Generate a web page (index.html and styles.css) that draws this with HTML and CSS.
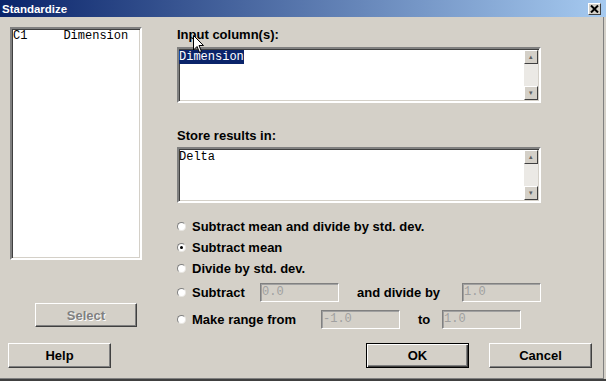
FILE: index.html
```html
<!DOCTYPE html>
<html lang="en">
<head>
    <meta charset="UTF-8">
    <meta name="viewport" content="width=device-width, initial-scale=1.0">
    <title>Standardize</title>
    <link rel="stylesheet" href="styles.css">
</head>
<body>
    <div class="window">
        <div class="titlebar">
            <span class="title">Standardize</span>
            <span class="close-btn">
                <svg width="9" height="8" viewBox="0 0 9 8">
                    <path d="M1 0.5 L8 7.5 M8 0.5 L1 7.5" stroke="#000" stroke-width="2"/>
                </svg>
            </span>
        </div>

        <div class="content">
            <div class="main">
                <div class="left-col">
                    <div class="listbox">
                        <div class="list-item">C1     Dimension</div>
                    </div>
                    <button class="btn select-btn" disabled>Select</button>
                </div>

                <div class="right-col">
                    <div class="field-label">Input column(s):</div>
                    <div class="textbox">
                        <div class="textbox-text"><span class="selected">Dimension</span></div>
                        <div class="scrollbar">
                            <span class="scroll-btn">&#9652;</span>
                            <span class="scroll-track"></span>
                            <span class="scroll-btn">&#9662;</span>
                        </div>
                    </div>

                    <div class="field-label store-label">Store results in:</div>
                    <div class="textbox">
                        <div class="textbox-text">Delta</div>
                        <div class="scrollbar">
                            <span class="scroll-btn">&#9652;</span>
                            <span class="scroll-track"></span>
                            <span class="scroll-btn">&#9662;</span>
                        </div>
                    </div>

                    <div class="options">
                        <div class="option"><span class="radio"></span>Subtract mean and divide by std. dev.</div>
                        <div class="option"><span class="radio checked"></span>Subtract mean</div>
                        <div class="option"><span class="radio"></span>Divide by std. dev.</div>
                        <div class="option tall">
                            <span class="radio"></span>
                            <span class="opt-text subtract-text">Subtract</span>
                            <span class="small-input">0.0</span>
                            <span class="opt-text divide-text">and divide by</span>
                            <span class="small-input">1.0</span>
                        </div>
                        <div class="option tall">
                            <span class="radio"></span>
                            <span class="opt-text range-text">Make range from</span>
                            <span class="small-input">-1.0</span>
                            <span class="opt-text to-text">to</span>
                            <span class="small-input">1.0</span>
                        </div>
                    </div>
                </div>
            </div>

            <div class="footer">
                <button class="btn">Help</button>
                <button class="btn ok-btn">OK</button>
                <button class="btn cancel-btn">Cancel</button>
            </div>
        </div>

        <svg class="cursor" width="12" height="19" viewBox="0 0 12 19">
            <path d="M0.5 0.5 L0.5 15 L4 11.5 L6.5 17.5 L8.5 16.5 L6 10.5 L10.5 10.5 Z" fill="#fff" stroke="#000" stroke-width="1"/>
        </svg>
    </div>
</body>
</html>
```

FILE: styles.css
```css
body {
    margin: 0;
    background-color: #d4d0c8;
    font-family: "Liberation Sans", Arial, sans-serif;
}

.window {
    position: relative;
    width: 606px;
    height: 381px;
    border-bottom: 2px solid #404040;
    box-sizing: border-box;
    overflow: hidden;
}

.titlebar {
    height: 17px;
    display: flex;
    align-items: center;
    justify-content: space-between;
    padding: 0 5px 0 2px;
    background: linear-gradient(to right, #0a246a, #a6caf0);
}

.title {
    color: white;
    font-weight: bold;
    font-size: 11.5px;
}

.close-btn {
    width: 13px;
    height: 12px;
    box-sizing: border-box;
    display: flex;
    align-items: center;
    justify-content: center;
    background-color: #d4d0c8;
    border-top: 1px solid #fff;
    border-left: 1px solid #fff;
    border-right: 1px solid #404040;
    border-bottom: 1px solid #404040;
}

.content {
    height: 361px;
    margin-right: 2px;
    border-right: 1px solid #808080;
    border-bottom: 1px solid #808080;
}

.main {
    display: flex;
    align-items: flex-start;
    padding-top: 10px;
}

.left-col {
    width: 132px;
    padding-left: 10px;
    margin-right: 35px;
    display: flex;
    flex-direction: column;
}

.listbox {
    height: 233px;
    box-sizing: border-box;
    background-color: white;
    border: 2px solid;
    border-color: #808080 #fff #fff #808080;
    box-shadow: inset 1px 1px #404040, inset -1px -1px #d4d0c8;
    padding: 1px;
}

.list-item {
    font-family: "Liberation Mono", "Courier New", monospace;
    font-size: 12px;
    line-height: 13px;
    white-space: pre;
}

.btn {
    width: 103px;
    height: 25px;
    padding: 0;
    background-color: #d4d0c8;
    border: 1px solid;
    border-color: #fff #404040 #404040 #fff;
    box-shadow: inset -1px -1px #808080;
    font-family: "Liberation Sans", Arial, sans-serif;
    font-size: 13px;
    font-weight: bold;
    color: black;
}

.select-btn {
    margin-top: 43px;
    margin-left: 25px;
    width: 102px;
    height: 24px;
    color: #808080;
    text-shadow: 1px 1px #fff;
}

.field-label {
    font-size: 13px;
    font-weight: bold;
    line-height: 15px;
    margin-bottom: 5px;
}

.store-label {
    margin-top: 25px;
    margin-bottom: 4px;
}

.textbox {
    width: 364px;
    height: 56px;
    box-sizing: border-box;
    display: flex;
    background-color: white;
    border: 2px solid;
    border-color: #808080 #fff #fff #808080;
    box-shadow: inset 1px 1px #404040, inset -1px -1px #d4d0c8;
}

.textbox-text {
    flex: 1;
    padding-top: 2px;
    font-family: "Liberation Mono", "Courier New", monospace;
    font-size: 12px;
    line-height: 12px;
}

.selected {
    background-color: #0a246a;
    color: white;
}

.scrollbar {
    width: 14px;
    margin: 1px 1px 1px 0;
    display: flex;
    flex-direction: column;
    background-color: #ebe9e5;
}

.scroll-btn {
    height: 14px;
    box-sizing: border-box;
    background-color: #d4d0c8;
    border: 1px solid;
    border-color: #fff #404040 #404040 #fff;
    font-size: 7px;
    line-height: 12px;
    text-align: center;
    color: #606060;
}

.scroll-track {
    flex: 1;
}

.options {
    margin-top: 13px;
    font-size: 13px;
    font-weight: bold;
}

.option {
    height: 21px;
    display: flex;
    align-items: center;
}

.option.tall {
    height: 27px;
}

.radio {
    width: 9px;
    height: 9px;
    box-sizing: border-box;
    margin-right: 6px;
    border-radius: 50%;
    background-color: white;
    border: 1px solid;
    border-color: #808080 #e8e6e2 #e8e6e2 #808080;
    display: flex;
    align-items: center;
    justify-content: center;
}

.radio.checked::after {
    content: "";
    width: 3px;
    height: 3px;
    border-radius: 50%;
    background-color: black;
}

.opt-text {
    white-space: nowrap;
}

.subtract-text {
    width: 68px;
}

.divide-text {
    width: 105px;
    margin-left: 18px;
}

.range-text {
    width: 129px;
}

.to-text {
    width: 24px;
    margin-left: 18px;
}

.small-input {
    width: 79px;
    height: 19px;
    box-sizing: border-box;
    padding: 2px 0 0 1px;
    border: 1px solid;
    border-color: #808080 #fff #fff #808080;
    box-shadow: inset 1px 1px #a0a0a0;
    font-family: "Liberation Mono", "Courier New", monospace;
    font-size: 12px;
    font-weight: normal;
    line-height: 13px;
    color: #a0a0a0;
}

.footer {
    display: flex;
    margin-top: 10px;
    padding: 0 11px 0 8px;
}

.ok-btn {
    margin-left: auto;
    margin-right: 20px;
    border: 1px solid #000;
    box-shadow: inset 1px 1px #fff, inset -1px -1px #404040, inset -2px -2px #808080;
}

.cursor {
    position: absolute;
    left: 193px;
    top: 35px;
}
```
